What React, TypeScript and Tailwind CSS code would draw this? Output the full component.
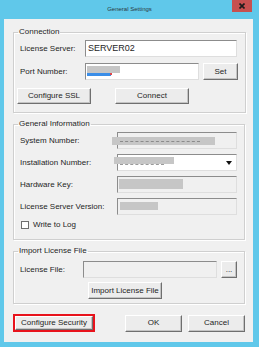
import type { ReactNode } from "react";

const font = { fontFamily: '"Liberation Sans", Arial, sans-serif' };

const sunken =
  "border border-t-[#8c8c8c] border-l-[#8c8c8c] border-r-[#dedede] border-b-[#dedede]";

function Btn({
  className = "",
  children,
}: {
  className?: string;
  children: ReactNode;
}) {
  return (
    <div
      className={`flex items-center justify-center bg-[#ececec] border border-t-white border-l-white border-r-[#6f6f6f] border-b-[#6f6f6f] shadow-[inset_-1px_-1px_0_#c4c4c4] text-[8px] leading-none text-[#1e1e1e] ${className}`}
    >
      {children}
    </div>
  );
}

function Group({ title, children, className = "" }: { title: string; children: ReactNode; className?: string }) {
  return (
    <fieldset className={`border border-[#cfcfcf] shadow-[inset_1px_1px_0_#fff,1px_1px_0_#fff] ${className}`}>
      <legend className="ml-[4px] px-[1px] text-[8px] leading-[10px] text-[#1e1e1e]">{title}</legend>
      {children}
    </fieldset>
  );
}

function Blur({ className }: { className: string }) {
  return <span className={`absolute bg-[#c6c6c6] ${className}`} />;
}

export default function App() {
  return (
    <div className="flex h-[347px] w-[259px] flex-col bg-[#60c8ea]" style={font}>
      {/* title bar */}
      <div className="relative flex h-[19px] items-start justify-center">
        <span className="mt-[6px] text-[6px] leading-none text-[#2b3a40]">General Settings</span>
        <div className="absolute right-[7px] top-0 flex h-[12px] w-[20px] items-center justify-center bg-[#c75050]">
          <svg width="6" height="6" viewBox="0 0 6 6">
            <path d="M0.5 0.5 L5.5 5.5 M5.5 0.5 L0.5 5.5" stroke="#1b1b1b" strokeWidth="1.6" />
          </svg>
        </div>
      </div>

      {/* client */}
      <div className="ml-[4px] mr-[6px] flex h-[323px] flex-col bg-[#f0f0f0] px-[9px] pt-[8px]">
        <Group title="Connection" className="w-[232px]">
          <div className="flex flex-col pl-[6px] pr-[7px] pt-[3px] pb-[8px] text-[8px] text-[#1e1e1e]">
            <div className="flex items-center">
              <span className="w-[65px]">License Server:</span>
              <div className={`flex h-[17px] w-[152px] items-center bg-white px-[2px] text-[9px] ${sunken}`}>SERVER02</div>
            </div>
            <div className="mt-[6px] flex items-center">
              <span className="w-[65px]">Port Number:</span>
              <div className={`relative h-[17px] w-[114px] bg-white ${sunken}`}>
                <span className="absolute left-[1px] top-[6px] h-[6px] w-[24px] bg-[#3b8ee8]" />
                <span className="absolute left-[24px] top-[8px] h-[3px] w-[2px] bg-[#e0464a]" />
                <Blur className="left-[1px] top-[2px] h-[7px] w-[33px]" />
              </div>
              <Btn className="ml-[4px] h-[17px] w-[35px]">Set</Btn>
            </div>
            <div className="mt-[8px] ml-[-3px] flex gap-[24px]">
              <Btn className="h-[16px] w-[74px]">Configure SSL</Btn>
              <Btn className="h-[16px] w-[74px]">Connect</Btn>
            </div>
          </div>
        </Group>

        <Group title="General Information" className="mt-[6px] w-[232px]">
          <div className="flex flex-col gap-[5px] pl-[6px] pr-[7px] pt-[3px] pb-[10px] text-[8px] text-[#1e1e1e]">
            <div className="flex items-center">
              <span className="w-[97px]">System Number:</span>
              <div className={`relative h-[17px] w-[120px] bg-[#f0f0f0] ${sunken}`}>
                <Blur className="left-[-6px] top-[4px] h-[8px] w-[103px]" />
                <span className="absolute left-[2px] top-[8px] h-px w-[80px] border-t border-dashed border-[#8a8a8a]" />
              </div>
            </div>
            <div className="flex items-center">
              <span className="w-[97px]">Installation Number:</span>
              <div className={`relative flex h-[17px] w-[120px] items-center justify-end bg-white pr-[2px] ${sunken}`}>
                <Blur className="left-[-4px] top-[2px] h-[7px] w-[60px]" />
                <span className="absolute left-[2px] top-[9px] h-px w-[44px] border-t border-dashed border-[#9a9a9a]" />
                <div className="flex h-[11px] w-[10px] items-center justify-center">
                  <span className="h-0 w-0 border-x-[3px] border-t-[4px] border-x-transparent border-t-[#111]" />
                </div>
              </div>
            </div>
            <div className="flex items-center">
              <span className="w-[97px]">Hardware Key:</span>
              <div className={`relative h-[17px] w-[120px] bg-[#f0f0f0] ${sunken}`}>
                <Blur className="left-[1px] top-[2px] h-[10px] w-[64px]" />
              </div>
            </div>
            <div className="flex items-center">
              <span className="w-[97px]">License Server Version:</span>
              <div className={`relative h-[17px] w-[120px] bg-[#f0f0f0] ${sunken}`}>
                <Blur className="left-[2px] top-[3px] h-[8px] w-[38px]" />
              </div>
            </div>
            <div className="flex items-center">
              <span className="ml-[1px] h-[8px] w-[8px] border border-[#6e6e6e] bg-white" />
              <span className="ml-[4px] leading-[9px]">Write to Log</span>
            </div>
          </div>
        </Group>

        <Group title="Import License File" className="mt-[6px] w-[232px]">
          <div className="flex flex-col pl-[6px] pr-[7px] pt-[5px] pb-[4px] text-[8px] text-[#1e1e1e]">
            <div className="flex items-center">
              <span className="w-[63px]">License File:</span>
              <div className={`h-[17px] w-[134px] bg-[#f0f0f0] ${sunken}`} />
              <Btn className="ml-[4px] h-[17px] w-[16px]">...</Btn>
            </div>
            <Btn className="ml-[68px] mt-[4px] h-[17px] w-[74px]">Import License File</Btn>
          </div>
        </Group>

        <div className="mt-[10px] flex w-[232px] items-center">
          <div className="h-[18px] w-[82px] border-2 border-[#e8131c]">
            <Btn className="h-full w-full">Configure Security</Btn>
          </div>
          <Btn className="ml-[30px] h-[17px] w-[57px]">OK</Btn>
          <Btn className="ml-[6px] h-[17px] w-[57px]">Cancel</Btn>
        </div>
      </div>
    </div>
  );
}
